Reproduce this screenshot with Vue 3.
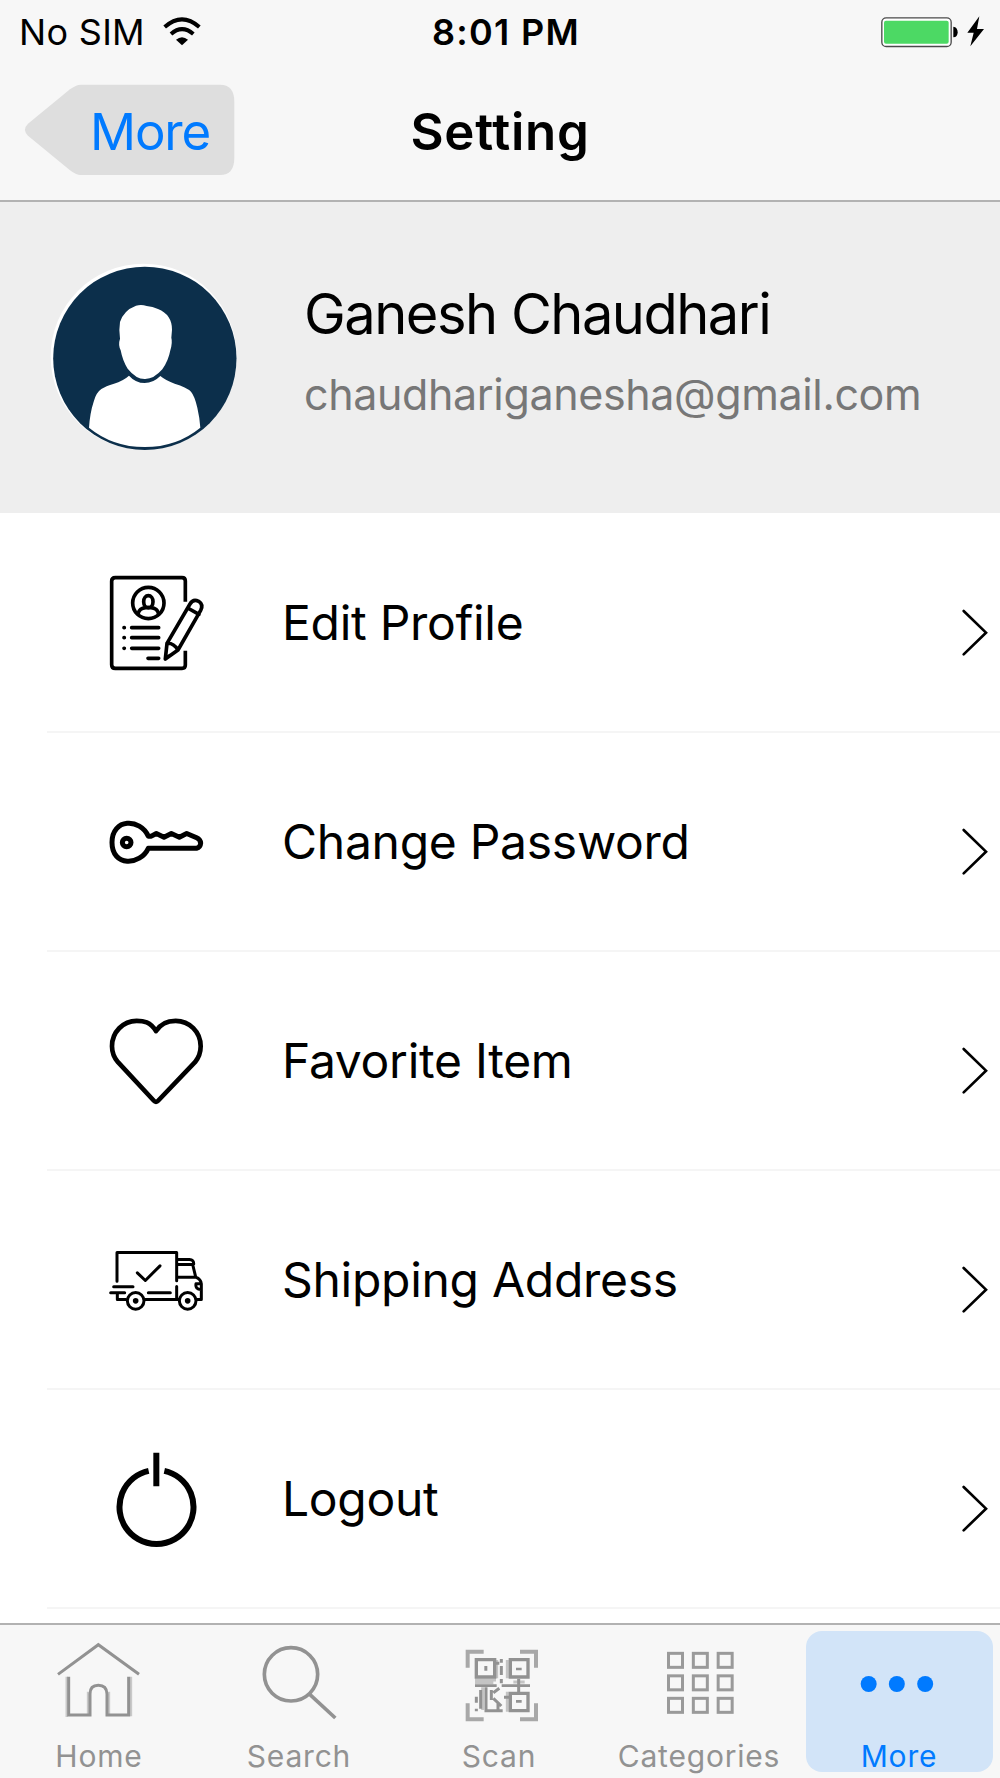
<template>
  <div class="screen">
    <header class="header">
      <div class="status-bar">
        <div class="status-left">
          <span class="carrier">No SIM</span>
          <svg class="wifi" viewBox="486 48 120 90">
            <g fill="none" stroke="#000">
              <path stroke-width="12" d="M494 81Q546 35 598 81" />
              <path stroke-width="12" d="M513 102Q546 73 580 102" />
            </g>
            <path d="M528 119Q546 104 564 119L546 136Z" />
          </svg>
        </div>
        <span class="clock">8:01 PM</span>
        <div class="status-right">
          <svg class="battery" viewBox="1140 45 315 99">
            <rect x="1145.500" y="53.500" width="208" height="86" rx="13" fill="#fff" stroke="#4a4a4a" stroke-width="4" />
            <rect x="1152" y="62" width="194" height="69" rx="6" fill="#4cd964" />
            <path d="M1360 80Q1373 82 1373 97T1360 112Z" />
            <path d="M1438 49L1402 98H1421L1411 139L1452 87H1431Z" />
          </svg>
        </div>
      </div>

      <nav class="nav-bar">
        <button class="back" type="button">
          <svg class="back-shape" viewBox="75 252 630 276">
            <path fill="#dedede" d="M242 254H660Q703 254 703 306V473Q703 525 660 525H242Q228 525 210 511L84 407Q66 389 84 371L210 268Q228 254 242 254Z" />
          </svg>
          <span class="back-label">More</span>
        </button>
        <h1 class="title">Setting</h1>
      </nav>
    </header>

    <section class="profile">
      <svg class="avatar" viewBox="150 185 564 573">
        <circle cx="431" cy="469" r="279" fill="#fff" />
        <circle cx="434.500" cy="474" r="275" fill="#0c2f4b" />
        <path fill="#fff" d="M408 316Q424 311 440 317Q458 319 474 326Q516 343 516 388L514 412Q518 426 511 450Q505 482 487 507Q461 537 434 536Q408 536 383 505Q368 482 362 450Q354 433 360 415Q356 390 360 365Q371 330 408 316Z" />
        <path fill="#fff" d="M387 526Q407 548 434 548Q460 548 481 527Q498 541 524 550Q559 560 573 574Q584 587 592 622Q599 652 601 682Q530 740 434 740Q338 740 267 682Q270 637 281 604Q288 577 304 566Q317 557 342 550Q369 542 387 526Z" />
      </svg>
      <div class="profile-text">
        <div class="name">{{ user.name }}</div>
        <div class="email">{{ user.email }}</div>
      </div>
    </section>

    <ul class="menu">
      <li v-for="item in menuItems" :key="item.id" class="menu-item">
        <svg class="menu-icon" :viewBox="item.viewBox" fill="none" stroke="#000" stroke-linecap="round" stroke-linejoin="round">
          <g v-if="item.id === 'edit'" stroke-width="11">
            <path d="M286 124V62Q286 52 276 52H76Q65 52 65 63V313Q65 324 76 324H276Q286 324 286 314V271" stroke-linecap="butt" />
            <circle cx="175" cy="128" r="47" />
            <ellipse cx="175" cy="124" rx="14" ry="18" />
            <path d="M144 161Q148 143 167 142H183Q202 143 206 161" />
            <path d="M125 202H206M125 232H206M125 264H206M174 294H206M102 202H103M102 232H103M102 264H103" />
            <path d="M226 296L231 249L300 131Q309 115 326 123Q341 133 332 150L264 269ZM293 143L327 162M231 249Q250 247 264 269M226 296L240 285" />
          </g>
          <g v-else-if="item.id === 'password'" stroke-width="15">
            <path d="M175 137C151 83 66 82 66 156S151 226 175 173H320Q331 171 332 158Q331 147 320 142L290 129L268 140L244 129L222 140L199 129L184 137Z" />
            <circle cx="110" cy="156" r="13" />
          </g>
          <path v-else-if="item.id === 'favorite'" stroke-width="14" d="M198 92C181 63 160 61 140 61C99 61 66 95 66 137Q66 164 84 185L191 300Q198 308 205 300L315 185Q332 164 332 137C332 94 298 61 257 61C237 61 214 65 198 92Z" />
          <g v-else-if="item.id === 'shipping'" stroke-width="9">
            <path d="M81 152V66H260V151M142 127L166 150L210 106M71 169H129M62 187H104M82 188V207H108M165 207H267M175 187H241M260 168V207M262 87H298Q312 88 311 101M262 102H308L317 139M262 140H317Q333 146 334 160V207H320M333 160H318Q315 177 333 177" />
            <circle cx="137" cy="211" r="25" />
            <circle cx="293" cy="211" r="25" />
            <circle cx="137" cy="211" r="4" fill="#000" />
            <circle cx="293" cy="211" r="4" fill="#000" />
          </g>
          <g v-else stroke-width="18" stroke-linecap="butt">
            <path d="M199 67V167M176 121A111 111 0 1 0 223 121" />
          </g>
        </svg>
        <span class="menu-label">{{ item.label }}</span>
        <svg class="chevron" viewBox="546 15 78 144">
          <path d="M551 21L618 86L551 151" fill="none" stroke="#000" stroke-width="8" stroke-linecap="round" />
        </svg>
      </li>
    </ul>

    <footer class="tab-bar">
      <div v-for="tab in tabs" :key="tab.id" class="tab" :class="{ active: tab.id === activeTab }">
        <svg class="tab-icon" :viewBox="tab.viewBox" fill="none" stroke="#929292">
          <g v-if="tab.id === 'home'" stroke-width="9">
            <path d="M200 230V351M264 345V275M327 345V275M393 230V349" stroke="#c9c9c9" stroke-width="7" />
            <path d="M174 223L295 134L417 223" />
            <path d="M206 230V345H270V282Q270 256 295 256T321 282V345H386V230" />
          </g>
          <g v-else-if="tab.id === 'search'" stroke-width="11">
            <circle cx="873" cy="223" r="80" />
            <path d="M926 280L1006 354" />
          </g>
          <g v-else-if="tab.id === 'scan'">
            <path d="M135 240H198M200 180V235M158 262V330M232 180V235M232 275V335M135 248H190M250 246H284" stroke="#c4c4c4" stroke-width="9" />
            <path d="M113 203V155H161M270 155H318V203M113 310V358H161M318 310V358H270" stroke="#a8a8a8" stroke-width="12" />
            <path d="M139 179H194V231H139ZM241 179H294V231H241ZM241 280H294V332H241Z" stroke-width="10" />
            <path d="M163 202H172M163 208H172M258 207H275M258 304H275M135 257H200M215 257H300" stroke-width="8" />
            <path d="M214 177V188M214 198V225M214 237V250M266 236V277M168 262V332H218M152 270V326M139 290V308M139 326V334M190 278L208 265M190 295L214 318M204 332V310M222 292H238M198 190H208M184 270V300" stroke-width="9" />
          </g>
          <g v-else-if="tab.id === 'categories'" stroke="#9a9a9a">
            <rect v-for="cell in gridCells" :key="cell.key" :x="cell.x" :y="cell.y" width="42" height="42" stroke-width="9" />
          </g>
          <g v-else fill="#007aff" stroke="none">
            <circle cx="266" cy="612" r="24" />
            <circle cx="350.500" cy="612" r="24" />
            <circle cx="435.500" cy="612" r="24" />
          </g>
        </svg>
        <span class="tab-label">{{ tab.label }}</span>
      </div>
    </footer>
  </div>
</template>

<script setup>
import { ref } from 'vue'

const user = {
  name: 'Ganesh Chaudhari',
  email: 'chaudhariganesha@gmail.com'
}

const menuItems = [
  { id: 'edit', label: 'Edit Profile', viewBox: '57 47 282 282' },
  { id: 'password', label: 'Change Password', viewBox: '57 13.5 282 282' },
  { id: 'favorite', label: 'Favorite Item', viewBox: '57 40.5 282 282' },
  { id: 'shipping', label: 'Shipping Address', viewBox: '57 7.5 282 282' },
  { id: 'logout', label: 'Logout', viewBox: '57 64.5 282 282' }
]

const activeTab = ref('more')

const tabs = [
  { id: 'home', label: 'Home', viewBox: '171 120 252 240' },
  { id: 'search', label: 'Search', viewBox: '771 120 252 240' },
  { id: 'scan', label: 'Scan', viewBox: '81 120 252 240' },
  { id: 'categories', label: 'Categories', viewBox: '681 120 252 240' },
  { id: 'more', label: 'More', viewBox: '231 480 252 240' }
]

// 3x3 squares of the categories icon
const gridCells = Array.from({ length: 9 }, (_, i) => ({
  key: i,
  x: 715.5 + (i % 3) * 74.5,
  y: 160 + Math.floor(i / 3) * 67.5
}))
</script>

<style>
body {
  margin: 0;
  background: #fff;
}
</style>

<style scoped>
.screen {
  display: flex;
  flex-direction: column;
  width: 1000px;
  height: 1778px;
  overflow: hidden;
  background: #fff;
  color: #000;
  font-family: Inter, "Liberation Sans", sans-serif;
}

svg {
  display: block;
  flex: none;
  overflow: visible;
}

.header {
  box-sizing: border-box;
  height: 202px;
  background: #f7f7f7;
  border-bottom: 2px solid #b2b2b2;
}

.status-bar {
  display: flex;
  align-items: center;
  box-sizing: border-box;
  height: 64px;
  padding-left: 12px;
  font-size: 36px;
}

.status-left,
.status-right {
  display: flex;
  align-items: center;
  box-sizing: border-box;
  flex: 1 1 0;
  min-width: 0;
}

.carrier {
  width: 143px;
  margin-left: 7px;
  letter-spacing: 0.3px;
  white-space: nowrap;
}

.wifi {
  width: 40px;
  height: 30px;
  margin-bottom: 2px;
}

.clock {
  font-weight: 600;
  letter-spacing: 1.3px;
}

.status-right {
  justify-content: flex-end;
}

.battery {
  width: 105px;
  height: 33px;
  margin: 0 15px 2px 0;
}

.nav-bar {
  display: grid;
  grid-template-columns: 1fr auto 1fr;
  align-items: center;
  height: 134px;
}

.back {
  display: grid;
  justify-self: start;
  align-items: center;
  margin: -3px 0 0 25px;
  padding: 0;
  border: 0;
  background: none;
  color: #007aff;
  font: inherit;
  font-size: 51px;
  letter-spacing: -1.2px;
}

.back-shape,
.back-label {
  grid-area: 1 / 1;
}

.back-shape {
  width: 210px;
  height: 92px;
}

.back-label {
  padding: 3px 3px 0 43px;
}

.title {
  margin: 0;
  font-size: 51px;
  font-weight: 600;
  letter-spacing: 0.7px;
}

.profile {
  display: flex;
  box-sizing: border-box;
  height: 311px;
  padding: 60px 0 0 50px;
  background: #eee;
}

.avatar {
  width: 188px;
  height: 191px;
}

.profile-text {
  padding: 18px 0 0 66px;
  white-space: nowrap;
}

.name {
  font-size: 56px;
  line-height: 68px;
  letter-spacing: -1.5px;
}

.email {
  margin-top: 19px;
  color: #777;
  font-size: 43px;
  line-height: 54px;
  letter-spacing: -0.37px;
}

.menu {
  flex: 1;
  margin: 0;
  padding: 1px 0 0 47px;
  list-style: none;
}

.menu-item {
  display: flex;
  align-items: center;
  box-sizing: border-box;
  height: 219px;
  padding: 0 12px 0 62px;
  border-bottom: 2px solid #f5f5f5;
}

.menu-icon {
  width: 94px;
  height: 94px;
}

.menu-label {
  flex: 1;
  margin-left: 79px;
  font-size: 48px;
  letter-spacing: -0.28px;
}

.chevron {
  width: 26px;
  height: 48px;
  margin-top: 20px;
}

.tab-bar {
  display: flex;
  box-sizing: border-box;
  height: 155px;
  margin-left: -1px;
  border-top: 2px solid #b2b2b2;
  background: #f7f7f7;
  color: #929292;
}

.tab {
  display: flex;
  flex-direction: column;
  align-items: center;
  width: 187px;
  height: 141px;
  margin: 6px 6.5px 0;
  border-radius: 16px;
}

.tab-icon {
  width: 84px;
  height: 80px;
  margin-top: 9px;
}

.tab-label {
  margin-top: 21px;
  font-size: 30px;
  line-height: 30px;
  letter-spacing: 0.8px;
}

.tab.active {
  background: #d2e4f8;
  color: #007aff;
}
</style>
